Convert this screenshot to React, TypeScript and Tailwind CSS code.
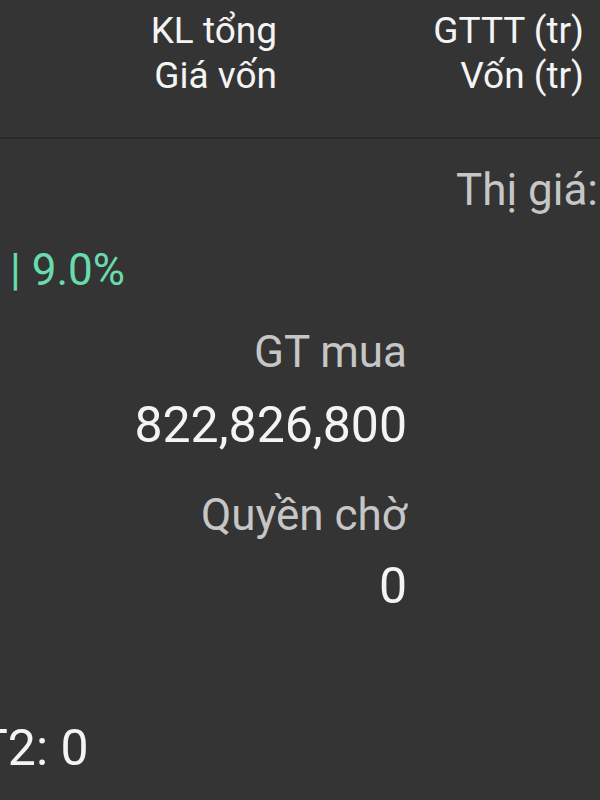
export default function App() {
  return (
    <div
      className="w-[600px] h-[800px] overflow-hidden bg-[#343434] text-[#f4f4f4]"
      style={{ fontFamily: 'Roboto, "Noto Sans", sans-serif' }}
    >
      {/* tiêu đề cột */}
      <div className="flex pt-2 pb-[39px] text-[37px] leading-[45px]">
        <div className="w-[277px] text-right">
          <div>KL tổng</div>
          <div>Giá vốn</div>
        </div>
        <div className="w-[307px] text-right">
          <div>GTTT (tr)</div>
          <div>Vốn (tr)</div>
        </div>
      </div>
      <div className="h-[2px] bg-[#2a2a2a]"></div>

      {/* nội dung */}
      <div className="flex">
        <div className="w-[120px] whitespace-nowrap">
          <div className="mt-[105px] pl-[10px] text-[44px] leading-[52px] text-[#68dcac]">| 9.0%</div>
          <div className="mt-[422px] -ml-[22px] text-[50px] leading-[60px]">T2: 0</div>
        </div>
        <div className="w-[287px] text-right whitespace-nowrap">
          <div className="mt-[187px] text-[44px] leading-[52px] text-[#c6c6c6]">GT mua</div>
          <div className="mt-[17px] text-[50px] leading-[60px]">822,826,800</div>
          <div className="mt-[34px] text-[44px] leading-[52px] text-[#c6c6c6]">Quyền chờ</div>
          <div className="mt-[15px] text-[50px] leading-[60px]">0</div>
        </div>
        <div className="flex-1 pr-[2px] text-right whitespace-nowrap">
          <div className="mt-[25px] text-[44px] leading-[52px] text-[#c6c6c6]">Thị giá:</div>
        </div>
      </div>
    </div>
  );
}
